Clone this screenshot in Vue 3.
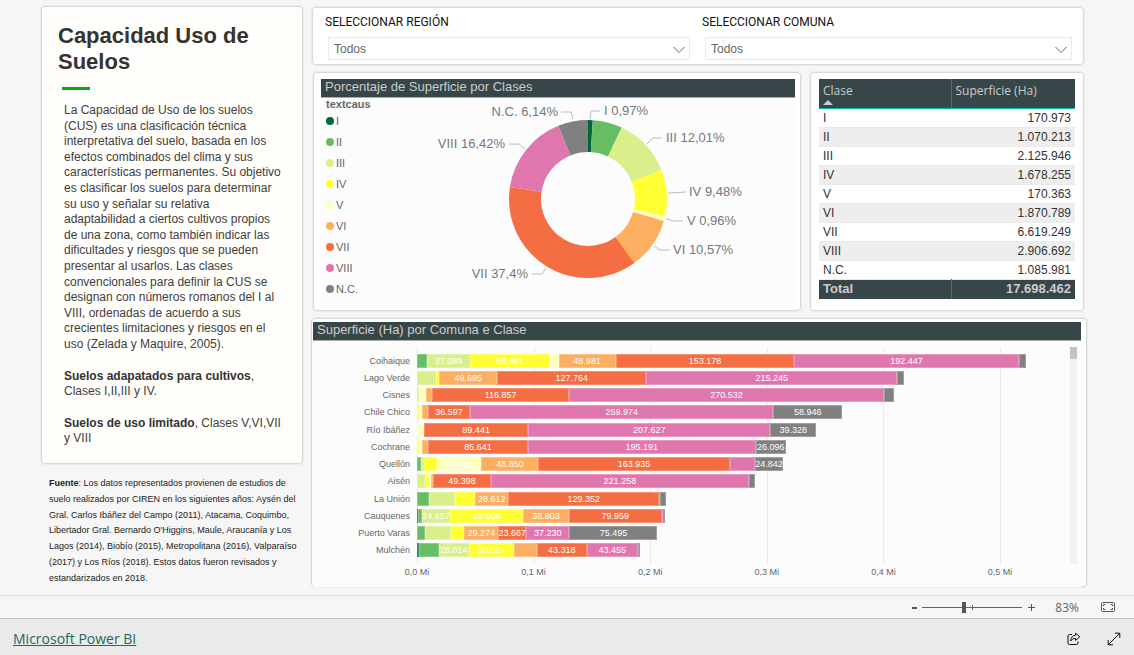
<script setup>
import { ref } from 'vue'

const colors = {
  I: '#006837',
  II: '#66bd63',
  III: '#d9ef8b',
  IV: '#ffff33',
  V: '#ffffbf',
  VI: '#fdae61',
  VII: '#f46d43',
  VIII: '#df77ae',
  'N.C.': '#808080'
}
const classes = Object.keys(colors)

const region = ref('Todos')
const comuna = ref('Todos')
const zoom = ref(41)

const rows = [
  ['I', '170.973'],
  ['II', '1.070.213'],
  ['III', '2.125.946'],
  ['IV', '1.678.255'],
  ['V', '170.363'],
  ['VI', '1.870.789'],
  ['VII', '6.619.249'],
  ['VIII', '2.906.692'],
  ['N.C.', '1.085.981']
]

/* Donut */
const cx = 197
const cy = 101
const rOut = 79
const rIn = 47
const total = 17698462
const slices = []
let acc = 0
const point = (r, t) => {
  const a = t * 2 * Math.PI
  return `${(cx + r * Math.sin(a)).toFixed(2)} ${(cy - r * Math.cos(a)).toFixed(2)}`
}
for (const [name, text] of rows) {
  const share = Number(text.replaceAll('.', '')) / total
  const end = acc + share
  const large = share > 0.5 ? 1 : 0
  slices.push({
    name,
    d: `M${point(rOut, acc)} A${rOut} ${rOut} 0 ${large} 1 ${point(rOut, end)} L${point(rIn, end)} A${rIn} ${rIn} 0 ${large} 0 ${point(rIn, acc)} Z`
  })
  acc = end
}
const callouts = [
  { text: 'I 0,97%', x: 213, y: 17, anchor: 'start', line: '199,21 200,13 209,13' },
  { text: 'III 12,01%', x: 275, y: 44, anchor: 'start', line: '256,46 262,40 271,40' },
  { text: 'IV 9,48%', x: 298, y: 98, anchor: 'start', line: '277,95 295,94' },
  { text: 'V 0,96%', x: 296, y: 127, anchor: 'start', line: '275,121 283,123 292,123' },
  { text: 'VI 10,57%', x: 282, y: 156, anchor: 'start', line: '263,148 269,152 279,152' },
  { text: 'VII 37,4%', x: 137, y: 180, anchor: 'end', line: '155,170 151,176 141,176' },
  { text: 'VIII 16,42%', x: 114, y: 50, anchor: 'end', line: '134,51 128,46 118,46' },
  { text: 'N.C. 6,14%', x: 167, y: 18, anchor: 'end', line: '182,21 180,14 170,14' }
]

/* Stacked bars: hectares per class in the order I..N.C. */
const maxHa = 548000
const labelMin = 23000
const communes = [
  ['Coihaique', [0, 8600, 37089, 68361, 7400, 48981, 153178, 192447, 6600]],
  ['Lago Verde', [0, 0, 16300, 2800, 0, 49695, 127764, 215245, 6000]],
  ['Cisnes', [0, 0, 1400, 0, 6200, 5700, 116857, 270532, 8000]],
  ['Chile Chico', [0, 0, 0, 1400, 2600, 5100, 36597, 259974, 58946]],
  ['Río Ibáñez', [0, 0, 0, 0, 6000, 0, 89441, 207627, 39328]],
  ['Cochrane', [0, 0, 0, 1500, 2600, 5400, 85641, 195191, 26096]],
  ['Quellón', [0, 3200, 2600, 11100, 38415, 48850, 163935, 21400, 24842]],
  ['Aisén', [0, 0, 6500, 3400, 1700, 2400, 49398, 221258, 5000]],
  ['La Unión', [0, 10600, 21700, 17500, 0, 28612, 129352, 900, 4700]],
  ['Cauquenes', [700, 3300, 24657, 62608, 0, 38803, 79959, 900, 2000]],
  ['Puerto Varas', [0, 6900, 22500, 11200, 0, 29274, 23667, 37230, 75495]],
  ['Mulchén', [1500, 17000, 26014, 38527, 0, 19500, 43318, 43455, 2400]]
].map(([name, values]) => ({
  name,
  segments: values
    .map((v, i) => ({
      cls: classes[i],
      width: (v / maxHa) * 100 + '%',
      color: colors[classes[i]],
      label: v > labelMin ? String(v).replace(/(\d{3})$/, '.$1') : '',
      v
    }))
    .filter((s) => s.v > 0)
}))
const ticks = [0, 1, 2, 3, 4, 5].map((n) => ({
  label: `0,${n} Mi`,
  left: ((n * 100000) / maxHa) * 100 + '%'
}))
</script>

<template>
  <div class="page">
    <main class="report">
      <aside class="side">
        <section class="card intro">
          <h1>Capacidad Uso de Suelos</h1>
          <div class="accent"></div>
          <div class="copy">
            <p>
              La Capacidad de Uso de los suelos (CUS) es una clasificación técnica interpretativa del
              suelo, basada en los efectos combinados del clima y sus características permanentes. Su
              objetivo es clasificar los suelos para determinar su uso y señalar su relativa
              adaptabilidad a ciertos cultivos propios de una zona, como también indicar las
              dificultades y riesgos que se pueden presentar al usarlos. Las clases convencionales para
              definir la CUS se designan con números romanos del I al VIII, ordenadas de acuerdo a sus
              crecientes limitaciones y riesgos en el uso (Zelada y Maquire, 2005).
            </p>
            <p><strong>Suelos adapatados para cultivos</strong>, Clases I,II,III y IV.</p>
            <p><strong>Suelos de uso limitado</strong>, Clases V,VI,VII y VIII</p>
          </div>
        </section>
        <p class="source">
          <strong>Fuente</strong>: Los datos representados provienen de estudios de suelo realizados
          por CIREN en los siguientes años: Aysén del Gral. Carlos Ibáñez del Campo (2011), Atacama,
          Coquimbo, Libertador Gral. Bernardo O'Higgins, Maule, Araucanía y Los Lagos (2014), Biobío
          (2015), Metropolitana (2016), Valparaíso (2017) y Los Ríos (2018). Estos datos fueron
          revisados y estandarizados en 2018.
        </p>
      </aside>

      <div class="content">
        <section class="card filters">
          <div class="filter region">
            <label for="region">SELECCIONAR REGIÓN</label>
            <div class="picker">
              <select id="region" v-model="region">
                <option>Todos</option>
              </select>
              <svg class="chevron" viewBox="0 0 12 8" aria-hidden="true"><path d="M0.5 1 L6 6.5 L11.5 1" /></svg>
            </div>
          </div>
          <div class="filter comuna">
            <label for="comuna">SELECCIONAR COMUNA</label>
            <div class="picker">
              <select id="comuna" v-model="comuna">
                <option>Todos</option>
              </select>
              <svg class="chevron" viewBox="0 0 12 8" aria-hidden="true"><path d="M0.5 1 L6 6.5 L11.5 1" /></svg>
            </div>
          </div>
        </section>

        <div class="middle">
          <section class="card donut-card">
            <h2>Porcentaje de Superficie por Clases</h2>
            <div class="donut-body">
              <div class="legend">
                <strong>textcaus</strong>
                <ul>
                  <li v-for="c in classes" :key="c">
                    <span class="dot" :style="{ background: colors[c] }"></span>{{ c }}
                  </li>
                </ul>
              </div>
              <svg class="donut" viewBox="0 0 404 208" role="img" aria-label="Porcentaje de Superficie por Clases">
                <path v-for="s in slices" :key="s.name" :d="s.d" :fill="colors[s.name]" />
                <g v-for="c in callouts" :key="c.text">
                  <polyline :points="c.line" />
                  <text :x="c.x" :y="c.y" :text-anchor="c.anchor">{{ c.text }}</text>
                </g>
              </svg>
            </div>
          </section>

          <section class="card table-card">
            <table>
              <thead>
                <tr>
                  <th scope="col">Clase<span class="sort"></span></th>
                  <th scope="col">Superficie (Ha)</th>
                </tr>
              </thead>
              <tbody>
                <tr v-for="r in rows" :key="r[0]">
                  <td>{{ r[0] }}</td>
                  <td>{{ r[1] }}</td>
                </tr>
              </tbody>
              <tfoot>
                <tr>
                  <td>Total</td>
                  <td>17.698.462</td>
                </tr>
              </tfoot>
            </table>
          </section>
        </div>

        <section class="card bars-card">
          <h2>Superficie (Ha) por Comuna e Clase</h2>
          <div class="chart">
            <div class="names">
              <span v-for="c in communes" :key="c.name">{{ c.name }}</span>
            </div>
            <div class="plot">
              <span v-for="t in ticks" :key="t.label" class="grid-line" :style="{ left: t.left }"></span>
              <div v-for="c in communes" :key="c.name" class="bar">
                <span
                  v-for="s in c.segments"
                  :key="s.cls"
                  class="segment"
                  :style="{ width: s.width, background: s.color }"
                  >{{ s.label }}</span
                >
              </div>
            </div>
            <div class="scroll"><div class="thumb"></div></div>
            <div class="axis">
              <span v-for="t in ticks" :key="t.label" class="tick" :style="{ left: t.left }">{{ t.label }}</span>
            </div>
          </div>
        </section>
      </div>
    </main>

    <div class="zoombar">
      <button type="button" aria-label="Alejar"><svg viewBox="0 0 9 9"><path d="M2 5H7" stroke-width="2" /></svg></button>
      <div class="slider">
        <span class="mark"></span>
        <input v-model="zoom" type="range" min="0" max="100" aria-label="Zoom" />
      </div>
      <button type="button" aria-label="Acercar"><svg viewBox="0 0 9 9"><path d="M1 4.5H8M4.5 1V8" /></svg></button>
      <span class="percent">83%</span>
      <button type="button" class="fit" aria-label="Ajustar a la página">
        <svg viewBox="0 0 14 10">
          <rect x="0.5" y="0.5" width="13" height="9" rx="1" />
          <path d="M2.5 4V2.5H4.5M9.5 2.5H11.5V4M11.5 6V7.5H9.5M4.5 7.5H2.5V6" />
        </svg>
      </button>
    </div>

    <footer class="footer">
      <a href="#">Microsoft Power BI</a>
      <div class="actions">
        <button type="button" aria-label="Compartir">
          <svg viewBox="0 0 14 14">
            <path d="M5 2.5H2.5Q1 2.5 1 4V11Q1 12.5 2.5 12.5H9.5Q11 12.5 11 11V9.5" />
            <path d="M8.5 1.2L12.8 4.8L8.5 8.4V6.4Q5.2 6.2 3.6 9Q4.2 3.6 8.5 3.2Z" />
          </svg>
        </button>
        <button type="button" aria-label="Pantalla completa">
          <svg viewBox="0 0 14 14"><path d="M1.2 12.8L12.8 1.2M8 1.2H12.8V6M1.2 8V12.8H6" /></svg>
        </button>
      </div>
    </footer>
  </div>
</template>

<style>
body {
  background: #eaeaea;
}
</style>

<style scoped>
* {
  box-sizing: border-box;
}
.page {
  font-family: 'Liberation Sans', Arial, sans-serif;
  background: #f6f6f6;
  color: #333;
}
h1,
h2,
p,
ul {
  margin: 0;
  padding: 0;
}
button {
  display: flex;
  padding: 0;
  border: 0;
  background: none;
}
.report {
  display: flex;
  gap: 6px;
  padding: 5px 46px 7px 40px;
}
.side {
  flex: 0 0 264px;
}
.card {
  background: #fff;
  border: 1px solid #ebebeb;
  border-radius: 5px;
  box-shadow: inset 0 0 0 1px #d9d9d9;
}
.intro {
  height: 460px;
  padding: 17px 21px 0 17px;
  background: #fffefa;
}
h1 {
  font-size: 22px;
  line-height: 26px;
}
.accent {
  width: 28px;
  height: 3px;
  margin: 12px 0 0 4px;
  background: #0ca80c;
}
.copy {
  padding: 13px 0 0 6px;
  font-size: 12px;
  line-height: 1.3;
  color: #404040;
}
.copy p {
  margin-bottom: 16px;
}
.copy strong {
  color: #333;
}
.source {
  padding: 11px 0 0 9px;
  font-size: 9px;
  line-height: 1.75;
  color: #222;
}
.content {
  display: flex;
  flex: 1;
  flex-direction: column;
  gap: 5px;
  min-width: 0;
}
.filters {
  display: flex;
  gap: 12px;
  height: 60px;
  margin: 1px 3px 0 1px;
  padding: 7px 12px 0 13px;
}
.filter.region {
  flex: 365;
}
.filter.comuna {
  flex: 370;
}
.filter label {
  display: block;
  font: 12px/16px Roboto, sans-serif;
  color: #111;
}
.picker {
  position: relative;
  margin: 7px 0 0 3px;
}
select {
  display: block;
  width: 100%;
  height: 23px;
  padding: 0 5px;
  appearance: none;
  border: 1px solid #eaeaea;
  border-radius: 0;
  background: #fff;
  font: 12px 'Liberation Sans', Arial, sans-serif;
  color: #666;
}
.chevron {
  position: absolute;
  top: 9px;
  right: 5px;
  width: 12px;
  height: 8px;
  fill: none;
  stroke: #666;
  pointer-events: none;
}
.middle {
  display: flex;
  gap: 7px;
  height: 241px;
  margin: 0 3px 0 2px;
}
.donut-card {
  flex: 492;
  padding: 7px 6px 0 8px;
}
.table-card {
  flex: 275;
  padding: 7px 9px 0;
}
h2 {
  height: 19px;
  padding: 0 4px;
  background: #374649;
  border-bottom: 1px solid #aaa;
  font-size: 13px;
  font-weight: 400;
  line-height: 16px;
  color: #ccc;
}
.donut-body {
  display: flex;
  height: 208px;
  background: #fcfcfc;
}
.legend {
  flex: 0 0 70px;
  padding: 0 0 0 5px;
  font-size: 11px;
  line-height: 12px;
  color: #666;
}
.legend ul {
  list-style: none;
}
.legend strong {
  display: block;
}
.legend li {
  display: flex;
  gap: 2px;
  align-items: center;
  height: 21px;
}
.dot {
  width: 8px;
  height: 8px;
  border-radius: 50%;
}
.donut {
  flex: 1;
  min-width: 0;
  height: 208px;
}
.donut text {
  font-size: 13px;
  fill: #777;
}
.donut polyline {
  fill: none;
  stroke: #bbb;
}
table {
  width: 100%;
  border-collapse: collapse;
  table-layout: fixed;
  font-size: 12px;
  color: #333;
}
th,
td {
  height: 19px;
  padding: 0 4px;
  line-height: 18px;
  text-align: right;
}
th:first-child,
td:first-child {
  width: 132px;
  text-align: left;
}
th {
  height: 29px;
  padding-top: 3px;
  background: #374649;
  border-bottom: 1px solid #01b8aa;
  font: 12px/18px 'Open Sans', 'Noto Sans', sans-serif;
  color: #ccc;
  text-align: left;
  vertical-align: top;
}
th:first-child,
tfoot td:first-child {
  border-right: 1px solid #5a676a;
}
.sort {
  display: block;
  width: 0;
  border: 5px solid transparent;
  border-top: 0;
  border-bottom-color: #ccc;
}
tbody tr {
  border-bottom: 1px solid #eaeaea;
}
tbody tr:nth-child(even) {
  background: #eee;
}
tfoot tr {
  border-top: 1px solid #01b8aa;
}
tfoot td {
  height: 20px;
  background: #374649;
  font-size: 13px;
  font-weight: 700;
  color: #ccc;
}
.bars-card {
  height: 271px;
  padding: 4px 6px 0 2px;
}
.chart {
  display: grid;
  grid-template-columns: 97px 1fr 7px;
  column-gap: 7px;
  height: 246px;
  padding: 6px 4px 0 0;
  background: #fcfcfc;
  font-size: 9px;
}
.names,
.plot {
  display: grid;
  grid-template-rows: repeat(12, 1fr);
  align-items: center;
  height: 217px;
  padding: 5px 0;
}
.names {
  justify-items: end;
  color: #666;
}
.plot {
  position: relative;
  margin-right: 7px;
}
.grid-line {
  position: absolute;
  top: 0;
  bottom: 0;
  width: 1px;
  background: #eaeaea;
}
.bar {
  position: relative;
  display: flex;
  height: 14px;
}
.segment {
  display: block;
  overflow: hidden;
  box-shadow: inset 0 0 0 1px rgba(255, 255, 255, 0.25);
  line-height: 15px;
  text-align: center;
  white-space: nowrap;
  color: #fff;
}
.scroll {
  height: 217px;
  background: #f2f2f2;
}
.thumb {
  height: 12px;
  background: #c2c2c2;
}
.axis {
  position: relative;
  grid-column: 2;
  height: 22px;
  margin-right: 7px;
  color: #666;
}
.tick {
  position: absolute;
  top: 2px;
  transform: translateX(-50%);
  white-space: nowrap;
}
.zoombar {
  display: flex;
  align-items: center;
  justify-content: flex-end;
  height: 23px;
  padding-right: 19px;
  border-top: 1px solid #ddd;
  color: #666;
}
.zoombar svg {
  width: 9px;
  height: 9px;
  fill: none;
  stroke: #555;
}
.slider {
  position: relative;
  width: 100px;
  height: 12px;
  margin: 0 5px 0 3px;
}
.slider input {
  display: block;
  width: 100%;
  height: 12px;
  margin: 0;
  appearance: none;
  background: linear-gradient(#666, #666) center / 100% 1px no-repeat;
}
.slider input::-webkit-slider-thumb {
  width: 4px;
  height: 11px;
  appearance: none;
  background: #555;
}
.mark {
  position: absolute;
  top: 4px;
  left: 50%;
  width: 1px;
  height: 5px;
  background: #666;
}
.percent {
  margin: 0 22px 0 19px;
  font: 12px 'Open Sans', 'Noto Sans', sans-serif;
}
.zoombar .fit svg {
  width: 14px;
  height: 10px;
}
.footer {
  display: flex;
  align-items: center;
  justify-content: space-between;
  height: 37px;
  padding: 3px 13px 0;
  background: #eaeaea;
  border-top: 1px solid #c8c8c8;
}
.footer a {
  font: 500 14px/20px 'Open Sans', 'Noto Sans', sans-serif;
  color: #1d6862;
}
.actions {
  display: flex;
  gap: 26px;
}
.actions svg {
  width: 14px;
  height: 14px;
  fill: none;
  stroke: #111;
}
</style>
